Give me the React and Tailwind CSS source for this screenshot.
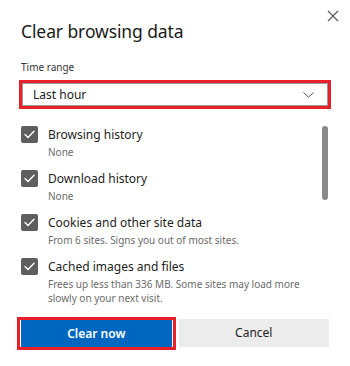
import { useState } from "react";

const items = [
  { label: "Browsing history", detail: "None" },
  { label: "Download history", detail: "None" },
  { label: "Cookies and other site data", detail: "From 6 sites. Signs you out of most sites." },
  {
    label: "Cached images and files",
    detail: "Frees up less than 336 MB. Some sites may load more slowly on your next visit.",
  },
];

const Check = () => (
  <div className="w-[17px] h-[17px] shrink-0 rounded-[2px] bg-[#5e5e5e] flex items-center justify-center">
    <svg width="11" height="9" viewBox="0 0 11 9" fill="none">
      <path d="M1 4.6L4 7.5L10 1.2" stroke="white" strokeWidth="1.4" strokeLinecap="round" strokeLinejoin="round" />
    </svg>
  </div>
);

const App = () => {
  const [range] = useState("Last hour");

  return (
    <div className="w-[350px] h-[366px] bg-white relative font-['Noto_Sans',sans-serif] text-[#1b1b1b] overflow-hidden">
      {/* close button */}
      <button className="absolute right-[11px] top-[9px] w-[13px] h-[13px] flex items-center justify-center">
        <svg width="12" height="12" viewBox="0 0 12 12">
          <path d="M1 1L11 11M11 1L1 11" stroke="#555" strokeWidth="1.1" />
        </svg>
      </button>

      <div className="pt-[19px] px-[21px]">
        <h1 className="text-[17.5px] leading-[24px] tracking-[-0.1px]">Clear browsing data</h1>

        <p className="mt-[17px] text-[10px] leading-[14px] text-[#333]">Time range</p>

        {/* select, with red annotation */}
        <div className="mt-[9px] mx-px h-[23px] border border-[#9a9a9a] outline-[3px] outline-solid outline-[#e8202a] flex items-center justify-between pl-[10px] pr-[13px]">
          <span className="text-[12px] text-[#222]">{range}</span>
          <svg width="11" height="6" viewBox="0 0 11 6" fill="none">
            <path d="M0.5 0.5L5.5 5.2L10.5 0.5" stroke="#555" strokeWidth="1" />
          </svg>
        </div>

        <div className="flex mt-[20px]">
          <div className="flex-1 flex flex-col gap-[11px]">
            {items.map((item, i) => (
              <div key={i} className="flex gap-[10px]">
                <Check />
                <div>
                  <p className="text-[12px] leading-[18px] text-[#1e1e1e]">{item.label}</p>
                  <p className="mt-px text-[10px] leading-[14px] text-[#6b6b6b]">{item.detail}</p>
                </div>
              </div>
            ))}
          </div>
          <div className="w-[6px] h-[74px] rounded-full bg-[#8a8a8a] mr-px shrink-0" />
        </div>

        <div className="mt-[14px] grid grid-cols-2 gap-[7px] items-end">
          <div className="relative">
            <button className="w-full h-[27px] bg-[#0067c0] text-white text-[12px] font-semibold block">Clear now</button>
            <div className="absolute -left-[4px] -right-[4px] -top-[3px] -bottom-[3px] border-[3px] border-[#e8202a] pointer-events-none" />
          </div>
          <button className="w-full h-[28px] bg-[#ececec] text-[#1e1e1e] text-[12px] block">Cancel</button>
        </div>
      </div>
    </div>
  );
};

export default App;
